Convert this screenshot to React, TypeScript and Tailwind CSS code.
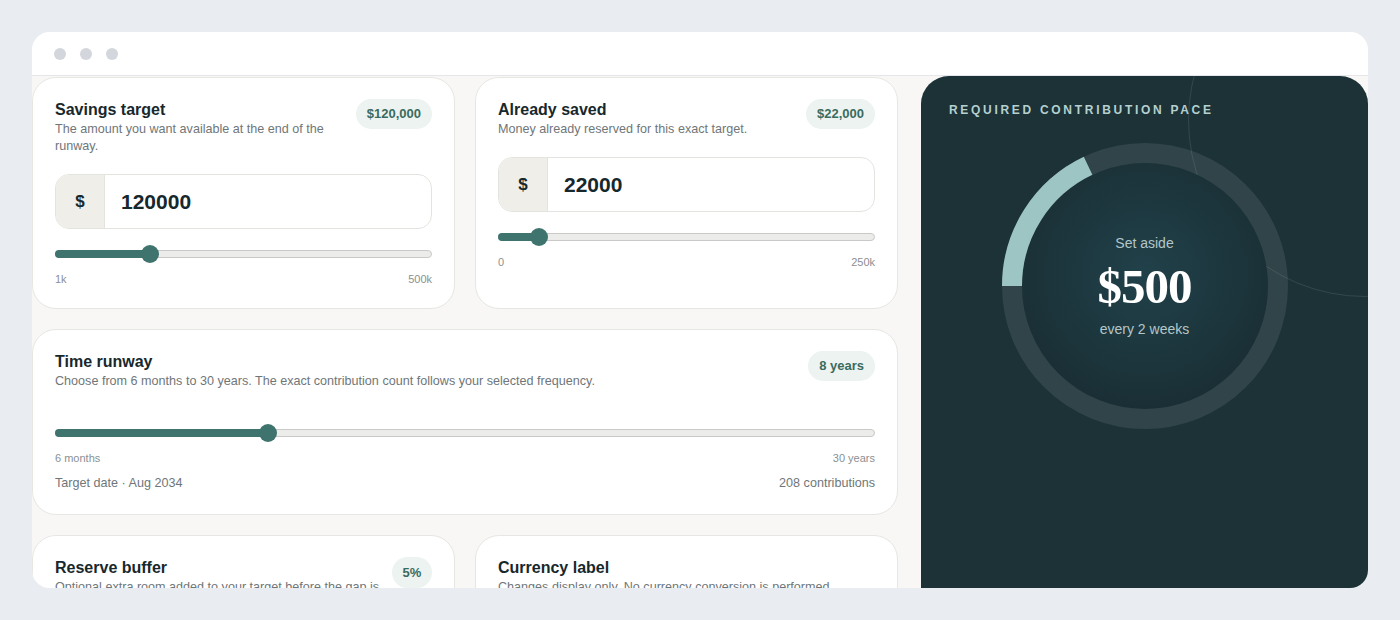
import React from 'react'

const SANS = "font-['Liberation_Sans',Arial,sans-serif]"

interface SliderProps {
  value: number
  min: number
  max: number
}

// Track + thumb drawn with divs, thumb centre follows native range maths
function Slider({ value, min, max }: SliderProps): React.ReactElement {
  const p = (value - min) / (max - min)
  const pos = `calc(9px + ${p} * (100% - 18px))`
  return (
    <div className="relative h-[18px] w-full">
      <div className="absolute left-0 right-0 top-1/2 h-[8px] -translate-y-1/2 rounded-full border border-[#c9c9c7] bg-[#ececea]" />
      <div
        className="absolute left-0 top-1/2 h-[8px] -translate-y-1/2 rounded-full bg-[#3f746e]"
        style={{ width: pos }}
      />
      <div
        className="absolute top-0 h-[18px] w-[18px] -translate-x-1/2 rounded-full bg-[#3f746e]"
        style={{ left: pos }}
      />
    </div>
  )
}

interface CardHeaderProps {
  title: string
  desc: string
  badge?: string
  round?: boolean
}

function CardHeader({ title, desc, badge, round }: CardHeaderProps): React.ReactElement {
  return (
    <div className="flex items-start justify-between gap-3">
      <div className="min-w-0 pt-px">
        <h3 className="text-[16px] font-bold leading-[20px] text-[#17282c]">{title}</h3>
        <p className="mt-px text-[12.6px] leading-[17px] text-[#6f7679]">{desc}</p>
      </div>
      {badge && (
        <span
          className={[
            'flex shrink-0 items-center justify-center rounded-full bg-[#edf3f0] font-bold text-[#3a6b60]',
            round ? 'h-[31px] w-[40px] text-[13px]' : 'h-[30px] px-[11px] text-[13px]',
          ].join(' ')}
        >
          {badge}
        </span>
      )}
    </div>
  )
}

function MoneyInput({ value }: { value: string }): React.ReactElement {
  return (
    <div className="mt-[19px] flex h-[55px] overflow-hidden rounded-[14px] border border-[#e3e3df] bg-white">
      <div className="flex w-[49px] items-center justify-center border-r border-[#e3e3df] bg-[#efeee9] text-[17px] font-bold text-[#17282c]">
        $
      </div>
      <div className="flex items-center pl-4 text-[21px] font-bold text-[#17282c]">{value}</div>
    </div>
  )
}

function RangeLabels({ left, right }: { left: string; right: string }): React.ReactElement {
  return (
    <div className="mt-[10px] flex justify-between text-[11px] leading-[13px] text-[#8b9092]">
      <span>{left}</span>
      <span>{right}</span>
    </div>
  )
}

const CARD = 'rounded-[24px] border border-[#e6e6e2] bg-white px-[22px] pt-[21px] pb-[22px]'

export default function App(): React.ReactElement {
  return (
    <div className={`min-h-[620px] bg-[#e9ecf0] p-8 ${SANS}`}>
      <div className="flex h-[556px] flex-col overflow-hidden rounded-[18px] bg-[#f8f7f5]">
        {/* Title bar */}
        <div className="flex h-[44px] shrink-0 items-center gap-[14px] border-b border-[#e4e6e9] bg-white pl-[22px]">
          <span className="h-3 w-3 rounded-full bg-[#d3d6dc]" />
          <span className="h-3 w-3 rounded-full bg-[#d3d6dc]" />
          <span className="h-3 w-3 rounded-full bg-[#d3d6dc]" />
        </div>

        <div className="grid min-h-0 flex-1 grid-cols-[866px_447px] gap-[23px] overflow-hidden">
          {/* Inputs column */}
          <div className="flex flex-col gap-5 pt-px">
            <div className="grid grid-cols-2 gap-5">
              <div className={CARD}>
                <CardHeader
                  title="Savings target"
                  desc="The amount you want available at the end of the runway."
                  badge="$120,000"
                />
                <MoneyInput value="120000" />
                <div className="mt-[16px]">
                  <Slider value={120000} min={1000} max={500000} />
                </div>
                <RangeLabels left="1k" right="500k" />
              </div>

              <div className={CARD}>
                <CardHeader
                  title="Already saved"
                  desc="Money already reserved for this exact target."
                  badge="$22,000"
                />
                <MoneyInput value="22000" />
                <div className="mt-[16px]">
                  <Slider value={22000} min={0} max={250000} />
                </div>
                <RangeLabels left="0" right="250k" />
              </div>
            </div>

            <div className={CARD}>
              <CardHeader
                title="Time runway"
                desc="Choose from 6 months to 30 years. The exact contribution count follows your selected frequency."
                badge="8 years"
              />
              <div className="mt-[34px]">
                <Slider value={8} min={0.5} max={30} />
              </div>
              <RangeLabels left="6 months" right="30 years" />
              <div className="mt-[10px] flex justify-between text-[12.6px] leading-[17px] text-[#6f7679]">
                <span>Target date · Aug 2034</span>
                <span>208 contributions</span>
              </div>
            </div>

            <div className="grid grid-cols-2 gap-5">
              <div className={`${CARD} h-[160px]`}>
                <CardHeader
                  title="Reserve buffer"
                  desc="Optional extra room added to your target before the gap is calculated."
                  badge="5%"
                  round
                />
              </div>
              <div className={`${CARD} h-[160px]`}>
                <CardHeader
                  title="Currency label"
                  desc="Changes display only. No currency conversion is performed."
                />
              </div>
            </div>
          </div>

          {/* Result panel */}
          <div className="relative overflow-hidden rounded-t-[28px] bg-[#1c3237] px-7 pt-[27px]">
            <div className="pointer-events-none absolute left-[267px] top-[-133px] h-[354px] w-[354px] rounded-full border border-white/10" />
            <p className="relative text-[12px] font-bold uppercase leading-[14px] tracking-[0.225em] text-[#b5d0cf]">
              Required contribution pace
            </p>
            <div className="relative mx-auto mt-[26px] h-[286px] w-[286px]">
              <svg width="286" height="286" viewBox="0 0 286 286" className="absolute inset-0">
                <defs>
                  <radialGradient id="disc" cx="50%" cy="45%" r="55%">
                    <stop offset="0%" stopColor="#21414a" />
                    <stop offset="100%" stopColor="#1a2f35" />
                  </radialGradient>
                </defs>
                <circle cx="143" cy="143" r="123" fill="url(#disc)" />
                <circle cx="143" cy="143" r="133" fill="none" stroke="rgba(255,255,255,0.09)" strokeWidth="20" />
                <circle
                  cx="143"
                  cy="143"
                  r="133"
                  fill="none"
                  stroke="#9cc5c3"
                  strokeWidth="20"
                  strokeDasharray="150 836"
                  transform="rotate(180 143 143)"
                />
              </svg>
              <div className="absolute inset-0 flex flex-col items-center justify-center">
                <span className="text-[14px] leading-[17px] text-[#b3c7c9]">Set aside</span>
                <span className="mt-[9px] font-['Liberation_Serif','Times_New_Roman',serif] text-[49px] font-bold leading-[52px] tracking-[-0.02em] text-white">
                  $500
                </span>
                <span className="mt-[8px] text-[14px] leading-[17px] text-[#b3c7c9]">every 2 weeks</span>
              </div>
            </div>
          </div>
        </div>
      </div>
    </div>
  )
}
